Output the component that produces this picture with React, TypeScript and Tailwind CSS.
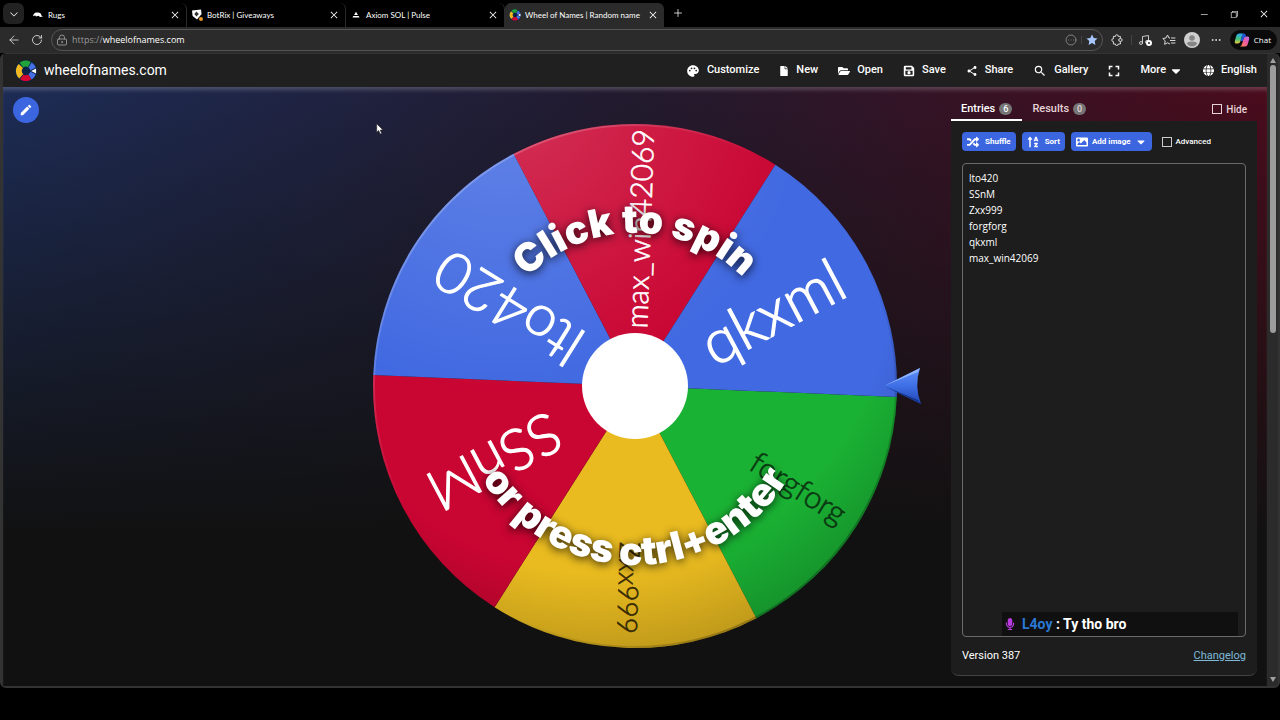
import { useState } from 'react';
import type { ReactNode } from 'react';
import {
  FaCaretDown,
  FaFile,
  FaFolderOpen,
  FaImage,
  FaMicrophone,
  FaRandom,
  FaSortAlphaUp,
} from 'react-icons/fa';
import { FaGlobe } from 'react-icons/fa6';
import { MdFullscreen, MdModeEdit, MdPalette, MdSearch, MdShare } from 'react-icons/md';
import {
  VscChevronDown,
  VscChromeClose,
  VscChromeMinimize,
  VscChromeRestore,
} from 'react-icons/vsc';
import {
  ArrowLeft,
  CircleEllipsis,
  Ellipsis,
  LockKeyhole,
  Music,
  Plus,
  RotateCw,
} from 'lucide-react';

const uiFont = 'font-[Open_Sans,Noto_Sans,sans-serif]';

const RED = '#c90532';
const BLUE = '#4169e1';
const GREEN = '#1ab234';
const YELLOW = '#e9bb20';

const slices = [
  { name: 'forgforg', angle: 32, color: GREEN, text: '#0b3a12', size: 31, end: 246 },
  { name: 'Zxx999', angle: 92, color: YELLOW, text: '#3a2c05', size: 28, end: 248 },
  { name: 'SSnM', angle: 152, color: RED, text: '#fff', size: 57, end: 231 },
  { name: 'lto420', angle: 212, color: BLUE, text: '#fff', size: 57, end: 230 },
  { name: 'max_win42069', angle: 272, color: RED, text: '#fff', size: 30, end: 257 },
  { name: 'qkxml', angle: 332, color: BLUE, text: '#fff', size: 61, end: 233 },
];

const RADIUS = 262;

const slicePath = (angle: number) => {
  const from = ((angle - 29.6) * Math.PI) / 180;
  const to = ((angle + 30.4) * Math.PI) / 180;
  const x1 = RADIUS * Math.cos(from);
  const y1 = RADIUS * Math.sin(from);
  const x2 = RADIUS * Math.cos(to);
  const y2 = RADIUS * Math.sin(to);
  return `M0 0 L${x1} ${y1} A${RADIUS} ${RADIUS} 0 0 1 ${x2} ${y2} Z`;
};

const WheelLogo = ({ className }: { className: string }) => (
  <svg viewBox="0 0 24 24" className={className} aria-hidden="true">
    <circle cx="12" cy="12" r="12" fill="#0c2348" />
    <g fill="none" strokeWidth="6.4">
      <path d="M7 5.6 A7.8 7.8 0 0 1 15.6 5" stroke="#1fa33a" />
      <path d="M16.4 5.5 A7.8 7.8 0 0 1 16.4 18.5" stroke="#4670e6" />
      <path d="M16.2 18.6 A7.8 7.8 0 0 1 7.4 18.3" stroke="#d5062f" />
      <path d="M6.8 17.8 A7.8 7.8 0 0 1 6.4 6.5" stroke="#efb91f" />
    </g>
    <path d="M15 12 L24 7.6 V16.4 Z" fill="#0c2348" />
    <path d="M17.6 12 L23 9.2 V14.8 Z" fill="#fff" />
  </svg>
);

const BrowserTab = ({
  title,
  icon,
  active = false,
}: {
  title: string;
  icon: ReactNode;
  active?: boolean;
}) => (
  <div
    className={`flex h-6 w-[159px] shrink-0 items-center gap-1 rounded-t-md pr-1 pl-1 text-white ${
      active ? 'bg-[#2b2b2b]' : 'border-r border-[#2a2a2a]'
    }`}
  >
    <span className="flex w-3 shrink-0 justify-center">{icon}</span>
    <span className="flex-1 text-[8px] whitespace-nowrap">{title}</span>
    <button aria-label={`Close ${title}`} className="p-0.5">
      <VscChromeClose className="size-2.5" />
    </button>
  </div>
);

const NavItem = ({ icon, label }: { icon: ReactNode; label: string }) => (
  <button className="flex items-center gap-[7px] px-2.5 whitespace-nowrap">
    {icon}
    {label}
  </button>
);

const Wheel = () => (
  <svg viewBox="-290 -290 580 580" className="w-[580px]" role="img" aria-label="Wheel of names">
    <defs>
      <radialGradient id="gloss" gradientUnits="userSpaceOnUse" cx="-130" cy="-290" r="300">
        <stop offset="0" stopColor="#fff" stopOpacity="0.18" />
        <stop offset="1" stopColor="#fff" stopOpacity="0" />
      </radialGradient>
      <radialGradient id="shade" gradientUnits="userSpaceOnUse" cx="-40" cy="-110" r="400">
        <stop offset="0.74" stopColor="#000" stopOpacity="0" />
        <stop offset="1" stopColor="#000" stopOpacity="0.22" />
      </radialGradient>
      <linearGradient id="rim" x1="0" y1="0" x2="1" y2="1">
        <stop offset="0" stopColor="#fff" stopOpacity="0.35" />
        <stop offset="0.4" stopColor="#fff" stopOpacity="0" />
        <stop offset="0.6" stopColor="#000" stopOpacity="0" />
        <stop offset="1" stopColor="#000" stopOpacity="0.4" />
      </linearGradient>
      <linearGradient id="pointer" x1="0" y1="0" x2="0" y2="1">
        <stop offset="0" stopColor="#5f90f8" />
        <stop offset="0.5" stopColor="#3f6fe6" />
        <stop offset="1" stopColor="#1f45b4" />
      </linearGradient>
      <path id="arc-top" d="M-153 0 A153 153 0 0 1 153 0" />
      <path id="arc-bottom" d="M-179 0 A179 179 0 0 0 179 0" />
    </defs>

    {slices.map((slice) => (
      <path key={slice.name} d={slicePath(slice.angle)} fill={slice.color} />
    ))}
    {slices.map((slice) => (
      <text
        key={slice.name}
        transform={`rotate(${slice.angle})`}
        x={slice.end}
        dy="0.34em"
        textAnchor="end"
        fontSize={slice.size}
        fill={slice.text}
        stroke={slice.text}
        strokeWidth={slice.size / 50}
        className="font-[Lato,sans-serif] font-light"
      >
        {slice.name}
      </text>
    ))}
    <circle r={RADIUS} fill="url(#gloss)" />
    <circle r={RADIUS} fill="url(#shade)" />
    <circle r={RADIUS - 1} fill="none" stroke="url(#rim)" strokeWidth="2" />
    <circle r="53" fill="#fff" />

    <g
      fill="#fff"
      fontSize="39"
      textAnchor="middle"
      className="font-[Inter,sans-serif] font-black drop-shadow-[0_2px_5px_rgba(0,0,0,0.8)]"
    >
      <text>
        <textPath href="#arc-top" startOffset="50%">
          Click to spin
        </textPath>
      </text>
      <text>
        <textPath href="#arc-bottom" startOffset="50%">
          or press ctrl+enter
        </textPath>
      </text>
    </g>

    <path d="M249 0 L285 -18 Q279 0 286 18 Z" fill="url(#pointer)" />
    <path d="M249 0 L285 -18 L283 -14 Z" fill="#8db1ff" />
    <path d="M249 0 L286 18 L283 14 Z" fill="#17368f" />
  </svg>
);

const App = () => {
  const [entries, setEntries] = useState('lto420\nSSnM\nZxx999\nforgforg\nqkxml\nmax_win42069');

  return (
    <div className="flex min-h-screen flex-col bg-black pb-8 font-[Roboto,sans-serif] text-white">
      {/* Tab strip */}
      <div className="flex items-end pl-[3px] font-[Lato,sans-serif]">
        <button
          aria-label="Tab search"
          className="mt-[3px] mr-1 mb-[3px] flex size-[21px] items-center justify-center rounded-md bg-[#222]"
        >
          <VscChevronDown className="size-3" />
        </button>
        <BrowserTab
          title="Rugs"
          icon={
            <svg viewBox="0 0 10 6" className="w-2.5">
              <path d="M0 4 Q1 0 4 .5 Q8 0 8.4 3.4 L10 4.6 L7 5 L5.6 3.8 L3 4.4 L2.4 3.4 Z" fill="#fff" />
            </svg>
          }
        />
        <BrowserTab
          title="BotRix | Giveaways"
          icon={
            <svg viewBox="0 0 12 12" className="size-3">
              <path d="M1 1.5 L10 .5 L10.6 5 L6 10.5 L1.6 7 Z" fill="#fff" />
              <path d="M5.4 2.6 L7.8 5 L5.4 7.4 L3.4 5 Z" fill="#333" />
              <circle cx="10" cy="10" r="2" fill="#e8972c" />
            </svg>
          }
        />
        <BrowserTab
          title="Axiom SOL | Pulse"
          icon={
            <svg viewBox="0 0 10 9" className="w-2" fill="#fff">
              <path d="M5 1 L7.4 5 H2.6 Z M1.6 6.2 H8.4 L9.4 8 H.6 Z" />
            </svg>
          }
        />
        <BrowserTab
          title="Wheel of Names | Random name"
          icon={<WheelLogo className="size-3" />}
          active
        />
        <button aria-label="New tab" className="mb-1.5 ml-1.5 p-0.5">
          <Plus className="size-3 stroke-[1.5]" />
        </button>
        <div className="mb-2 ml-auto flex gap-5 pr-[11px]">
          <button aria-label="Minimize">
            <VscChromeMinimize className="size-2.5" />
          </button>
          <button aria-label="Restore">
            <VscChromeRestore className="size-2.5" />
          </button>
          <button aria-label="Close window">
            <VscChromeClose className="size-2.5" />
          </button>
        </div>
      </div>

      {/* Address bar */}
      <div className={`flex h-[26px] items-center bg-[#2b2b2b] pr-[3px] pl-[7px] text-[#d8d8d8] ${uiFont}`}>
        <button aria-label="Back">
          <ArrowLeft className="size-3.5 stroke-[1.5]" />
        </button>
        <button aria-label="Reload" className="ml-2.5">
          <RotateCw className="size-3 stroke-[1.8]" />
        </button>
        <div className="ml-2 flex h-[22px] flex-1 items-center gap-1 rounded-full border border-[#555] px-1 text-[9px]">
          <LockKeyhole className="size-3 stroke-[1.8] text-[#9a9a9a]" />
          <span className="flex-1 text-[#9a9a9a]">
            https://<span className="text-white">wheelofnames.com</span>
          </span>
          <CircleEllipsis className="size-3 text-[#9a9a9a]" strokeWidth={1.5} />
          <span className="h-2 w-px bg-[#444]" />
          <svg viewBox="0 0 12 12" className="size-3" fill="#a9c7ff">
            <path d="M6 .6 L7.7 4 L11.5 4.5 L8.7 7.1 L9.4 11 L6 9.1 L2.6 11 L3.3 7.1 L.5 4.5 L4.3 4 Z" />
          </svg>
        </div>
        <div className="ml-2 flex items-center gap-2">
          <svg viewBox="0 0 12 12" className="size-3" fill="none" stroke="currentColor" strokeWidth="1">
            <path d="M2.4 2.4 H4.4 Q4.2 .8 5.8 .8 Q7.4 .8 7.2 2.4 H9.4 V4.6 Q7.6 4.6 7.6 6 Q7.6 7.4 9.4 7.4 V10 H7.2 Q7.4 11.5 5.8 11.5 Q4.2 11.5 4.4 10 H2.4 V7.6 Q.8 7.6 .8 6.1 Q.8 4.6 2.4 4.8 Z" />
            <path d="M9.4 4.6 Q11.2 4.6 11.2 6 Q11.2 7.4 9.4 7.4" />
          </svg>
          <span className="-mr-0.5 h-2.5 w-px bg-[#444]" />
          <span className="relative">
            <Music className="size-3 stroke-[1.8]" />
            <span className="absolute -right-0.5 bottom-0 size-1.5 rounded-full border-2 border-white bg-[#2b2b2b]" />
          </span>
          <svg viewBox="0 0 14 12" className="ml-1 w-3.5" fill="none" stroke="currentColor" strokeWidth="1">
            <path d="M8 4 L7 4 L5.5 1 L4 4 L.8 4.5 L3.2 6.8 L2.6 10.4 L5.5 8.8 L8 10" />
            <path d="M9 4 H13.4 M8 6.5 H13.4 M9 9 H13.4" />
          </svg>
          <svg viewBox="0 0 16 16" className="size-4">
            <circle cx="8" cy="8" r="8" fill="#cfcfcf" />
            <circle cx="8" cy="6" r="2.8" fill="#858585" />
            <path d="M3 12 Q3 9.6 8 9.6 Q13 9.6 13 12 Q11 14.6 8 14.6 Q5 14.6 3 12 Z" fill="#858585" />
          </svg>
          <Ellipsis className="ml-0.5 size-3" />
          <button className="flex h-5 items-center gap-1 rounded-full bg-[#0a0a0a] pr-1.5 pl-1 text-[8px] text-white">
            <svg viewBox="0 0 16 14" className="w-4">
              <defs>
                <linearGradient id="copilot-a" x1="0" y1="0" x2="0" y2="1">
                  <stop offset="0" stopColor="#2aa8f5" />
                  <stop offset="0.55" stopColor="#43c47a" />
                  <stop offset="1" stopColor="#f5c83a" />
                </linearGradient>
                <linearGradient id="copilot-b" x1="1" y1="0" x2="0" y2="1">
                  <stop offset="0" stopColor="#b66bf2" />
                  <stop offset="0.5" stopColor="#ee5a9d" />
                  <stop offset="1" stopColor="#ff8a4c" />
                </linearGradient>
              </defs>
              <path d="M5 .5 H10 Q8.4 1 7.8 3.4 L6.4 8.6 Q5.8 10.6 3.8 10.6 H2.4 Q.2 10.6 .9 7.8 L2.2 3 Q2.8 .5 5 .5 Z" fill="url(#copilot-a)" />
              <path d="M11 13.5 H6 Q7.6 13 8.2 10.6 L9.6 5.4 Q10.2 3.4 12.2 3.4 H13.6 Q15.8 3.4 15.1 6.2 L13.8 11 Q13.2 13.5 11 13.5 Z" fill="url(#copilot-b)" />
              <path d="M10 .5 Q11.6 .6 12.2 3.4 Q10.2 3.4 9.6 5.4 L8.8 8 H6.6 L7.8 3.4 Q8.4 1 10 .5 Z" fill="#2257d8" />
            </svg>
            Chat
          </button>
        </div>
      </div>

      {/* Page */}
      <div className="flex flex-1 rounded-md border-t border-r-2 border-b-2 border-l-[3px] border-[#333] bg-[#2b2b2b]">
        <div className="flex min-w-0 flex-1 flex-col">
          <header className="flex h-[33px] items-center justify-between bg-[#202020] pl-3">
            <a href="#" className="flex items-center gap-[7px] text-[14px]">
              <WheelLogo className="size-[22px]" />
              wheelofnames.com
            </a>
            <nav className="flex text-[11px] font-medium">
              <NavItem icon={<MdPalette className="size-3.5" />} label="Customize" />
              <NavItem icon={<FaFile className="size-2.5" />} label="New" />
              <NavItem icon={<FaFolderOpen className="size-3" />} label="Open" />
              <NavItem
                icon={
                  <svg viewBox="0 0 12 12" className="size-3">
                    <path
                      fillRule="evenodd"
                      fill="#fff"
                      d="M2 .8 H9 L11.2 3 V10 Q11.2 11.2 10 11.2 H2 Q.8 11.2 .8 10 V2 Q.8 .8 2 .8 Z M2.8 2.3 V4.4 H8.4 V2.3 Z M2.4 5.8 V9.7 H9.6 V5.8 Z"
                    />
                    <circle cx="6" cy="7.7" r="1.6" fill="#fff" />
                  </svg>
                }
                label="Save"
              />
              <NavItem icon={<MdShare className="size-3" />} label="Share" />
              <NavItem icon={<MdSearch className="size-3.5" />} label="Gallery" />
              <button aria-label="Fullscreen" className="px-[7px]">
                <MdFullscreen className="size-[18px]" />
              </button>
              <button className="flex items-center gap-[3px] px-2.5">
                More
                <FaCaretDown className="size-3.5" />
              </button>
              <NavItem icon={<FaGlobe className="size-[11px]" />} label="English" />
            </nav>
          </header>

          <main className="relative grid flex-1 grid-cols-[1fr_auto_1fr] bg-[linear-gradient(to_bottom,transparent,#111_75%),linear-gradient(to_right,#1d2c56,#221a2e_50%,#4a0c1d)] shadow-[inset_0_5px_4px_-2px_rgba(255,255,255,0.2)]">
            <div className="p-2.5">
              <button
                aria-label="Edit title"
                className="flex size-[26px] items-center justify-center rounded-full bg-[#3b66e0]"
              >
                <MdModeEdit className="size-3.5" />
              </button>
              <svg viewBox="0 0 12 18" className="absolute top-9 left-[373px] w-2">
                <path d="M1 1 V14 L4 11.4 L6.2 16.6 L8.6 15.6 L6.4 10.6 H10.6 Z" fill="#fff" stroke="#222" />
              </svg>
            </div>

            <div className="flex items-center pb-0.5">
              <Wheel />
            </div>

            {/* Entries panel */}
            <section className="mr-2.5 flex w-[306px] flex-col justify-self-end py-2.5">
              <div className="flex h-6 items-stretch text-[11px] font-medium">
                <button className="flex items-center gap-1 border-b-2 border-white px-2.5 pt-0.5">
                  Entries
                  <span className="rounded-full bg-[#757575] px-1 text-[9px] leading-3">6</span>
                </button>
                <button className="flex items-center gap-1 px-2.5 text-[#e6d3d7]">
                  Results
                  <span className="rounded-full bg-[#757575] px-1 text-[9px] leading-3">0</span>
                </button>
                <label className="ml-auto flex items-center gap-1 pr-2.5 text-[10px] text-[#e6d3d7]">
                  <input type="checkbox" className="size-2.5 appearance-none border border-[#e6d3d7]" />
                  Hide
                </label>
              </div>
              <div className="flex flex-1 flex-col rounded-b-lg border-b border-[#444] bg-[#1d1d1d] px-[11px] pt-[11px]">
                <div className="flex items-center gap-1.5 text-[8px] font-bold">
                  <button className="flex h-[19px] items-center gap-1.5 rounded-sm bg-[#3b66e0] px-[5px]">
                    <FaRandom className="size-3" />
                    Shuffle
                  </button>
                  <button className="flex h-[19px] items-center gap-1.5 rounded-sm bg-[#3b66e0] px-[5px]">
                    <FaSortAlphaUp className="size-3" />
                    Sort
                  </button>
                  <button className="flex h-[19px] items-center gap-1 rounded-sm bg-[#3b66e0] px-[5px]">
                    <FaImage className="size-3" />
                    Add image
                    <FaCaretDown className="size-3" />
                  </button>
                  <label className="ml-1 flex items-center gap-1 font-medium">
                    <input type="checkbox" className="size-2.5 appearance-none border border-[#ccc]" />
                    Advanced
                  </label>
                </div>
                <div className="relative mt-3 flex flex-1">
                  <textarea
                    aria-label="Entries"
                    value={entries}
                    onChange={(e) => setEntries(e.target.value)}
                    className={`flex-1 resize-none rounded-sm border border-[#6b6b6b] px-1.5 py-1.5 text-[10px] leading-4 outline-none ${uiFont}`}
                  />
                  <div className="absolute right-2 bottom-px left-10 flex h-6 items-center gap-1.5 bg-[#101010] pl-0.5 text-sm font-bold">
                    <FaMicrophone className="size-3 text-[#b83be0]" />
                    <span>
                      <span className="text-[#2a78d4]">L4oy</span> : Ty tho bro
                    </span>
                  </div>
                </div>
                <div className="flex h-[38px] items-center justify-between text-[11px]">
                  <span>Version 387</span>
                  <a href="#" className="text-[#7fb9d8] underline">
                    Changelog
                  </a>
                </div>
              </div>
            </section>
          </main>
        </div>

        {/* Scrollbar */}
        <div className="flex w-[11px] flex-col items-center py-1">
          <svg viewBox="0 0 6 5" className="w-1.5" fill="#a0a0a0">
            <path d="M3 0 L6 5 H0 Z" />
          </svg>
          <div className="mt-0.5 h-[43%] w-1.5 rounded-full bg-[#9c9c9c]" />
          <svg viewBox="0 0 6 5" className="mt-auto w-1.5" fill="#a0a0a0">
            <path d="M3 5 L6 0 H0 Z" />
          </svg>
        </div>
      </div>
    </div>
  );
};

export default App;
